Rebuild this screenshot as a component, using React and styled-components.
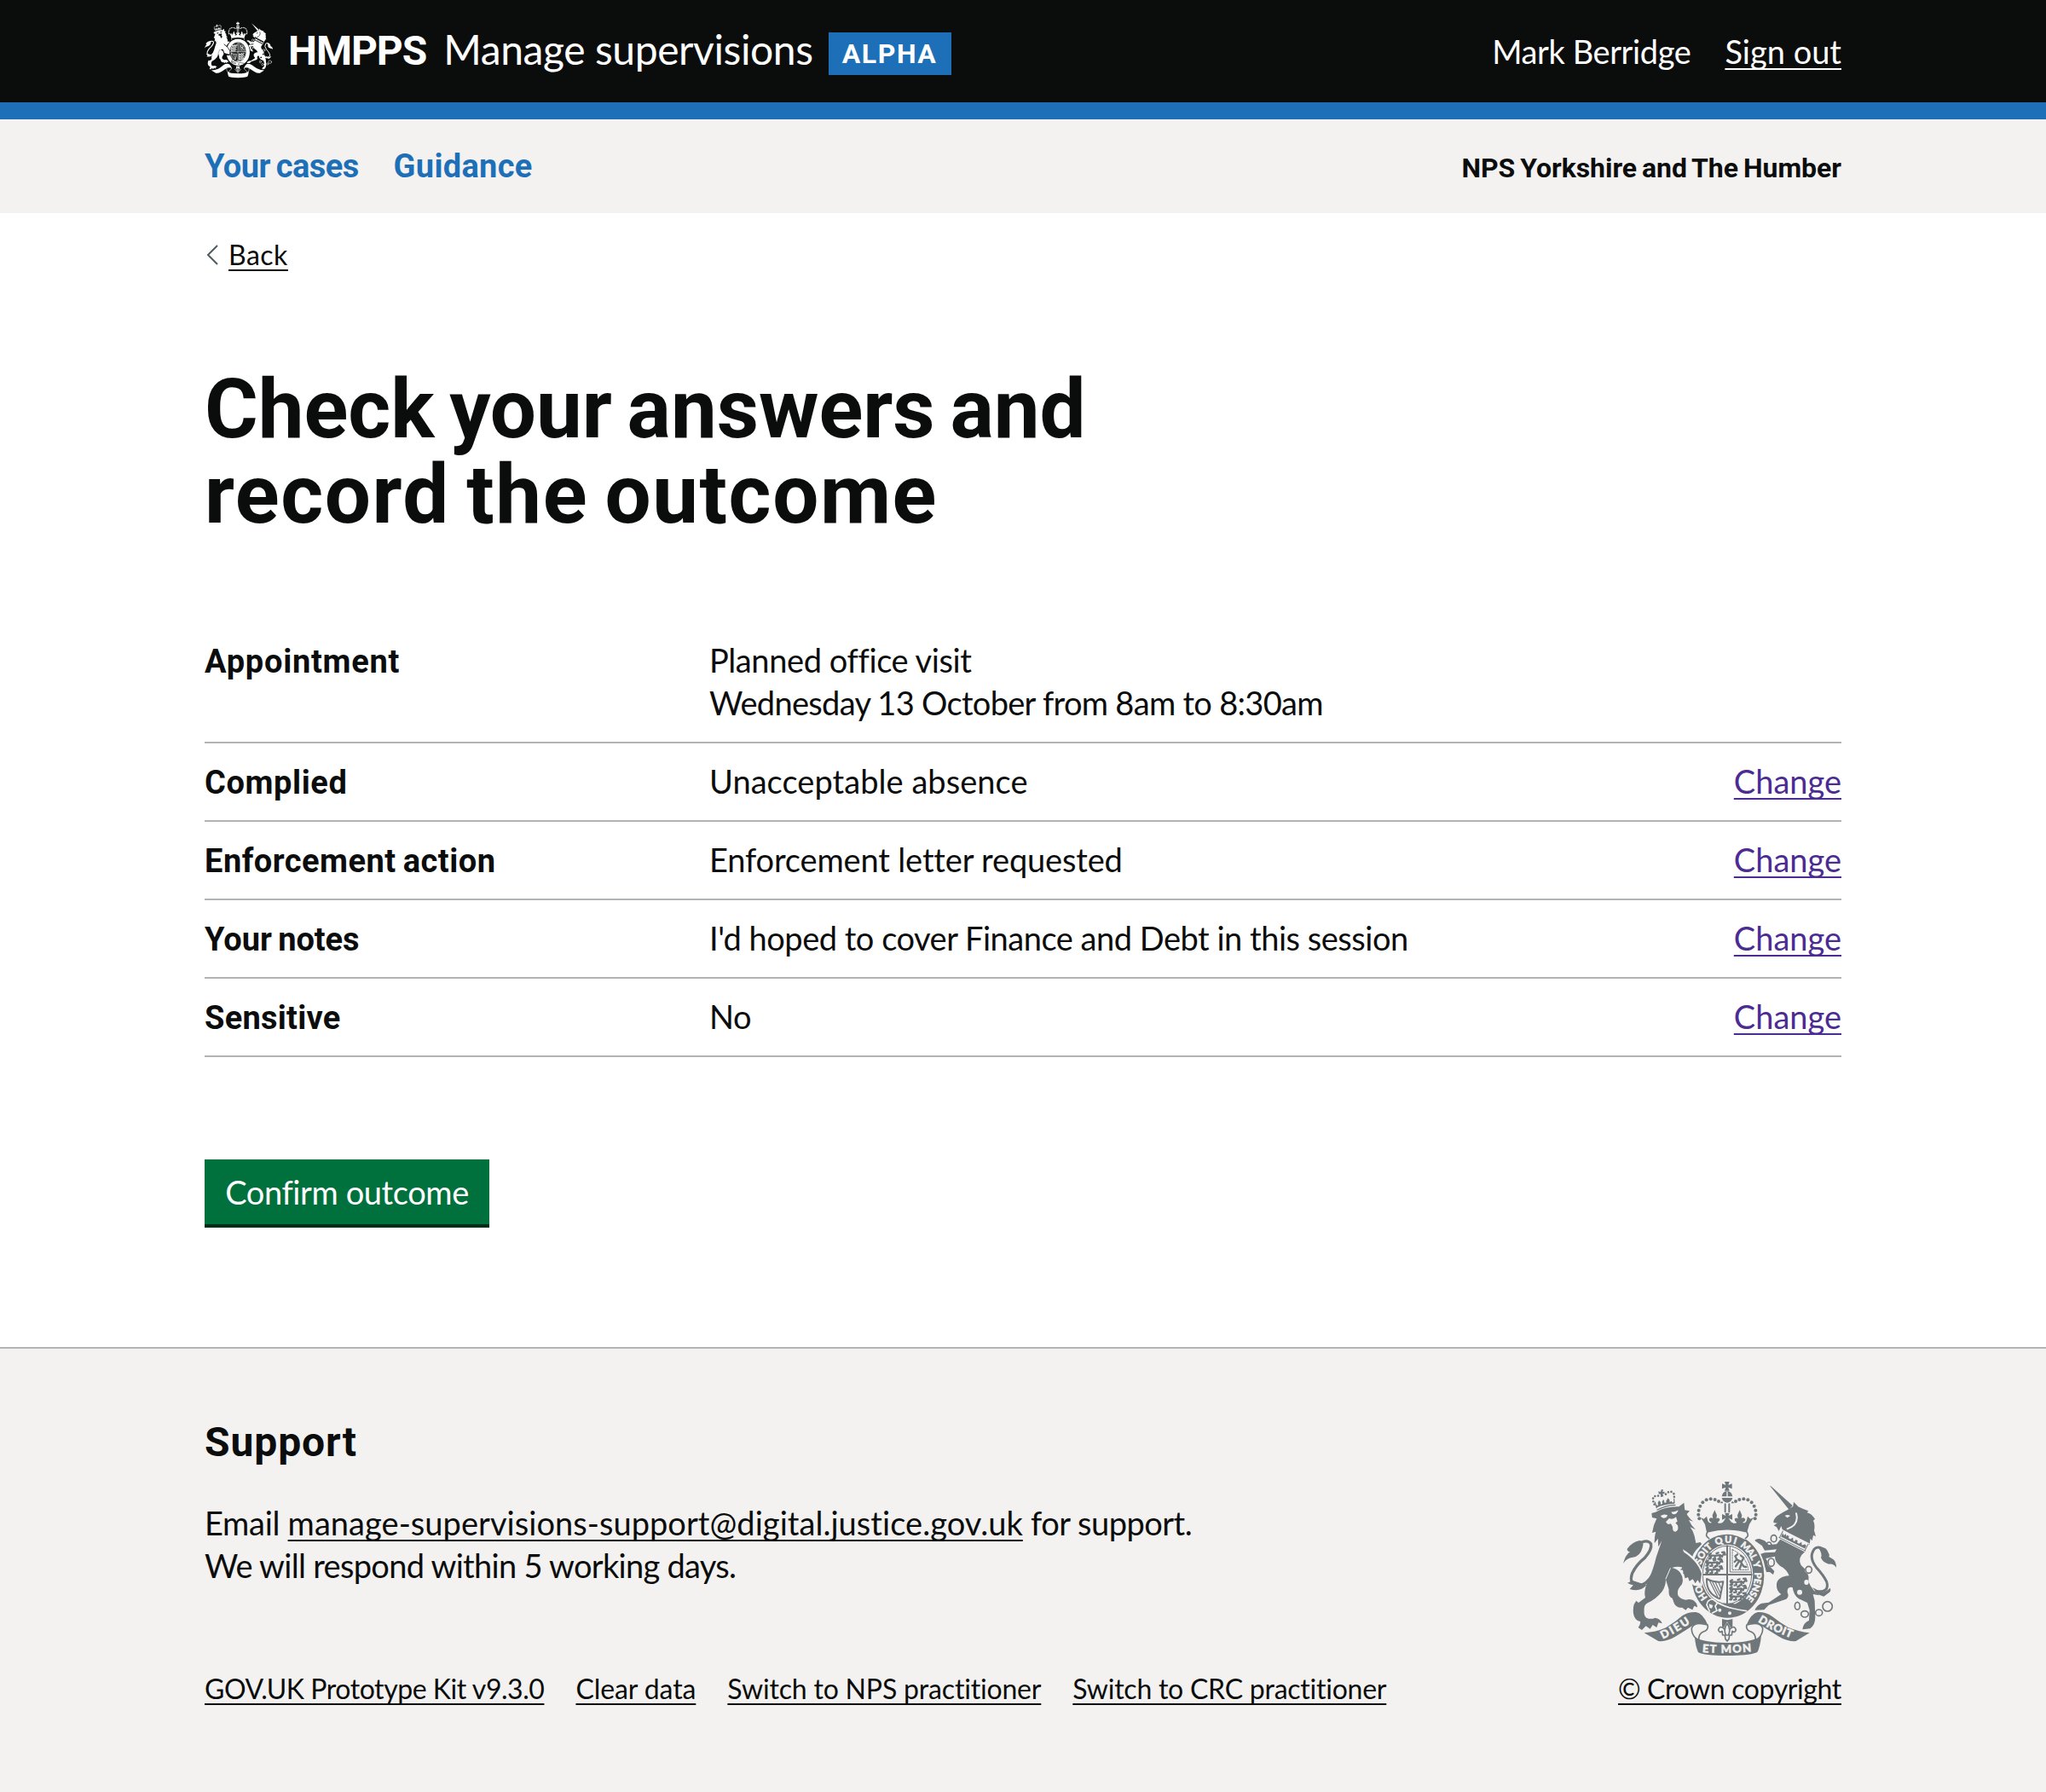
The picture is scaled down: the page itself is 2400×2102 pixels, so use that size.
import React from 'react';
import styled, { createGlobalStyle } from 'styled-components';

const ink = '#0b0c0c';
const blue = '#1d70b8';
const paper = '#f3f2f1';
const rule = '#b1b4b6';

const bodyFont = 'Lato, "Liberation Sans", sans-serif';
const boldFont = 'Roboto, "Liberation Sans", sans-serif';

const GlobalStyle = createGlobalStyle`
  *, *::before, *::after { box-sizing: border-box; }
  body {
    margin: 0;
    background: #fff;
    color: ${ink};
    font-family: ${bodyFont};
    font-size: 38px;
    line-height: 50px;
  }
  h1, h2, p, dl, dt, dd, ul { margin: 0; padding: 0; }
`;

const Container = styled.div`
  width: 1920px;
  margin: 0 auto;
  display: flex;
  flex-direction: ${p => (p.$column ? 'column' : 'row')};
  justify-content: ${p => (p.$column ? 'flex-start' : 'space-between')};
  align-items: ${p => p.$align || 'stretch'};
`;

const Tracked = styled.span`
  letter-spacing: ${p => p.$track || 0}px;
  white-space: pre;
`;

const Link = styled.a`
  color: ${p => p.$color || 'inherit'};
  letter-spacing: ${p => p.$track || 0}px;
  text-decoration: underline;
  text-decoration-thickness: 2px;
  text-underline-offset: 5px;
  text-decoration-skip-ink: none;
  white-space: nowrap;
`;

/* Header */
const Header = styled.header`
  height: 140px;
  background: ${ink};
  border-bottom: 20px solid ${blue};
  color: #fff;
`;

const Brand = styled.div`
  display: flex;
  align-items: flex-start;
`;

const HeaderCrest = styled.div`
  width: 80px;
  height: 67px;
  margin-top: 25px;
`;

const BrandName = styled.div`
  display: flex;
  align-items: baseline;
  gap: 20px;
  margin: 28px 0 0 18px;
  font-size: 48px;
  line-height: 60px;
`;

const Organisation = styled.strong`
  font-family: ${boldFont};
  letter-spacing: -1px;
`;

const Phase = styled.strong`
  width: 144px;
  height: 50px;
  margin: 38px 0 0 18px;
  background: ${blue};
  font: 700 32px/50px ${boldFont};
  letter-spacing: 1.6px;
  text-align: center;
`;

const Account = styled.div`
  display: flex;
  gap: 40px;
  padding-top: 35px;
`;

/* Primary navigation */
const Navigation = styled.nav`
  height: 110px;
  padding-top: 30px;
  background: ${paper};
  font-family: ${boldFont};
  font-weight: 700;
  word-spacing: -2px;
`;

const NavLinks = styled.div`
  display: flex;
  gap: 41px;
  color: ${blue};
`;

const Region = styled.div`
  font-size: 32px;
  line-height: 40px;
  letter-spacing: -0.03px;
`;

/* Main content */
const Main = styled.main`
  height: 1330px;
  padding-top: 29px;
`;

const Back = styled.div`
  display: flex;
  align-items: center;
  gap: 12px;
  height: 40px;
  padding-left: 2px;
  font-size: 32px;
  line-height: 40px;
`;

const Heading = styled.h1`
  margin-top: 111px;
  font: 700 96px/100px ${boldFont};
  word-spacing: -6px;
`;

const Line = styled.span`
  display: block;
  letter-spacing: ${p => p.$track}px;
`;

const Summary = styled.dl`
  margin-top: 120px;
`;

const SummaryRow = styled.div`
  display: grid;
  grid-template-columns: 592px 1fr auto;
  padding: ${p => (p.$first ? 1 : 21)}px 0 19px;
  border-bottom: 2px solid ${rule};
`;

const Key = styled.dt`
  font-family: ${boldFont};
  font-weight: 700;
  letter-spacing: ${p => p.$track}px;
  word-spacing: -2px;
`;

const Value = styled.dd`
  display: flex;
  flex-direction: column;
  margin-top: -2px;
  margin-bottom: 2px;
`;

const Button = styled.button`
  align-self: flex-start;
  width: 334px;
  height: 76px;
  margin-top: 120px;
  padding: 0;
  border: 0;
  background: #00703c;
  box-shadow: 0 4px 0 #002d18;
  color: #fff;
  font: 400 38px/76px ${bodyFont};
  letter-spacing: -0.4px;
`;

/* Footer */
const Footer = styled.footer`
  height: 522px;
  padding-top: 80px;
  border-top: 2px solid ${rule};
  background: ${paper};
`;

const Support = styled.h2`
  margin-bottom: 39px;
  font: 700 48px/60px ${boldFont};
  letter-spacing: 0.9px;
`;

const Legal = styled.div`
  display: flex;
  gap: 37px;
  margin-top: 100px;
  font-size: 32px;
  line-height: 40px;
`;

const Copyright = styled.div`
  display: flex;
  flex-direction: column;
  align-items: center;
  width: 262px;
  font-size: 32px;
  line-height: 40px;
`;

const FooterCrest = styled.div`
  width: 250px;
  height: 204px;
  margin-bottom: 19px;
`;

const CrestSvg = styled.svg`
  display: block;
  width: 100%;
  height: 100%;
  overflow: visible;
  color: ${p => p.$ink};
  --paper: ${p => p.$paper};

  .fill { fill: currentColor; }
  .line { fill: none; stroke: currentColor; stroke-linecap: round; stroke-linejoin: round; }
  .cut { fill: var(--paper); }
  .cutline { fill: none; stroke: var(--paper); stroke-linecap: round; stroke-linejoin: round; }
  text {
    fill: var(--paper);
    stroke: var(--paper);
    stroke-width: 1.4px;
    font-family: Lato, sans-serif;
    font-weight: 900;
  }
`;

const pearls = [
  [340, 214], [337, 200], [338, 185], [343, 170], [352, 157], [365, 148],
  [380, 145], [395, 147], [408, 153],
];

function Passant({ x, y }) {
  return (
    <path
      className="line"
      strokeWidth="6"
      transform={`translate(${x} ${y}) scale(1.1 1.15)`}
      d="M4 14 L0 6 L6 2 M4 8 L20 9 L36 7 L42 12 M8 9 L5 18 L0 18 M18 10 L20 18 L13 19 M34 8 L36 18 L29 19 M42 10 L47 4 L52 6 L49 -2 L42 -1 M24 2 L30 0"
    />
  );
}

function Crest({ color, background, lettering }) {
  return (
    <CrestSvg viewBox="72 84 750 612" $ink={color} $paper={background} aria-hidden="true">
      {/* Lion: crown */}
      <path className="line" strokeWidth="8" strokeDasharray="0 11" d="M182 164 L176 148 Q178 134 192 133 Q199 134 203 140 M222 128 Q232 117 242 120 Q254 126 252 136 L250 148" />
      <path className="fill" d="M196 118 L204 120 L206 112 L213 112 L211 120 L218 119 L217 127 L211 126 L214 136 L204 138 L204 128 L197 127 Z" />
      <path className="line" strokeWidth="3.5" d="M190 176 L184 156 M252 158 L251 144" />
      <path className="fill" d="M188 176 L190 166 L195 168 L194 158 L198 150 L204 156 L204 164 L210 162 L209 154 L214 146 L218 158 L223 158 L224 150 L230 142 L235 148 L236 156 L242 152 L246 158 L252 154 L252 162 Q220 162 188 176 Z" />
      <path className="line" strokeWidth="4" d="M192 183 Q220 168 255 166" />
      {/* Lion: head, mane and body */}
      <path
        className="fill"
        d="M186 191 Q225 170 268 172 L286 158 L289 184 L306 187 L296 198 Q304 214 319 224 L303 219 Q312 240 327 253 L308 244 Q320 260 323 275
           L328 300 L344 297 L350 306 Q324 322 314 350 L338 385 Q350 402 348 424 L345 444 L336 430 L326 442 L318 426 L306 434 L302 418
           L290 424 L294 409 L282 407 L288 396 L272 394 L282 386 Q262 380 244 387 Q260 390 272 403 Q288 426 278 446 Q258 466 266 486
           Q276 498 292 500 Q314 494 326 508 Q334 514 333 526 L322 521 L316 535 L300 527 L292 536 L280 527 Q262 530 252 514 L245 494 Q230 488 233 464
           L222 428 Q222 452 208 472 Q188 497 158 511 Q144 518 146 538 Q144 556 154 563 Q170 570 184 563 Q203 565 209 583 L196 580 L190 597
           L176 588 L167 602 L152 592 L138 606 L125 597 Q134 586 132 576 Q112 572 108 548 Q106 530 110 516 L118 503 L126 510 L150 492
           Q142 466 162 428 Q180 386 188 350 L208 292 L196 313 Q194 298 195 284 L182 301 Q182 276 187 260 L174 264 Q178 236 190 214 L174 210 L172 195 Z"
      />
      <path className="cut" d="M204 204 Q215 196 228 202 Q226 212 214 212 Q206 210 204 204 Z M242 190 Q254 192 266 184 Q262 199 250 199 Q242 198 242 190 Z" />
      <path className="cut" d="M222 226 L234 213 Q248 219 258 208 L263 224 L256 229 L264 238 Q269 256 256 260 Q245 260 246 243 L240 232 L230 234 Z" />
      <path className="cutline" strokeWidth="3" d="M238 389 L222 426" />
      {/* Lion: tail */}
      <path className="line" strokeWidth="10" d="M176 410 Q152 454 118 449 Q92 440 104 406 Q118 376 148 352 Q174 322 170 303 Q160 288 138 297" />
      <path className="fill" d="M72 372 Q80 342 96 330 Q86 330 86 320 Q104 296 130 291 Q148 292 140 316 Q132 348 106 350 Q84 352 72 372 Z" />
      <path className="fill" d="M106 432 L87 440 Q98 446 108 448 L95 462 Q132 474 154 448 Z" />

      {/* Unicorn: horn and head */}
      <path className="fill" d="M588 98 L594 101 L668 168 L656 183 Z" />
      <path
        className="fill"
        d="M655 181 L670 171 L672 155 L688 172 L706 180 L724 187 L719 193 Q734 196 747 215 L741 221 Q748 234 744 256 L750 277
           L741 272 L737 292 L731 284 L728 306 L718 300 L712 312 L700 292 L690 298 L684 286 L674 288 L668 276 L656 276 L648 262
           L632 252 L628 240 L620 258 L612 244 L602 238 L614 230 L601 228 Q600 214 618 202 L638 190 Z"
      />
      <path className="cutline" strokeWidth="6" d="M681 196 Q692 236 650 250" />
      <path className="cut" d="M641 204 Q650 198 660 204 L650 211 Z" />
      {/* Unicorn: body, hind legs */}
      <path
        className="fill"
        d="M627 284 L712 330 Q684 352 698 378 Q730 404 724 434 Q730 452 742 466 L762 484 L740 480 L746 503 L748 562 Q748 588 730 601
           L703 604 Q706 580 726 572 L728 536 L720 510 L690 496 Q672 484 668 456 Q648 452 650 474 Q658 488 646 497 L584 518 L568 535 L535 536
           Q544 516 560 512 L584 509 L628 480 Q610 468 612 444 Q616 418 656 415 Q648 392 624 380 Q606 366 606 347 L574 354 L590 384
           L604 399 L600 411 L588 402 L576 402 L568 376 L552 358 L548 341 L570 334 L606 332 L612 322 L570 326 L560 308 L531 298
           Q536 284 552 285 L570 292 L584 306 L612 304 Z"
      />
      {/* Unicorn: coronet collar */}
      <g transform="translate(634 258) rotate(27)">
        <path className="cut" d="M-4 -4 H104 V30 H-4 Z" />
        <path className="line" strokeWidth="3" d="M0 24 V0 M100 0 V24 M-2 26 H102" />
        <path className="fill" d="M3 20 V6 L10 12 L14 4 L20 12 V6 H28 V12 L36 14 L42 4 L48 14 L54 12 V6 H62 V12 L70 14 L76 4 L82 14 L90 6 L97 8 V20 Z" />
      </g>
      {/* Unicorn: tail */}
      <path className="line" strokeWidth="9" d="M752 470 Q800 474 788 436 Q778 414 752 386 Q724 350 744 322 Q754 310 772 319" />
      <path className="fill" d="M760 318 Q784 308 794 334 Q800 342 796 348 L812 358 Q822 368 822 386 Q812 372 796 374 Q776 370 768 352 Q774 338 760 318 Z" />
      <path className="fill" d="M738 456 L768 472 Q784 474 800 458 Q806 468 794 476 L778 488 L756 480 Z" />
      {/* Unicorn: chain */}
      <g strokeWidth="5">
        <ellipse className="line" cx="602" cy="284" rx="10" ry="12" />
        <ellipse className="line" cx="585" cy="308" rx="9" ry="11" />
        <ellipse className="cut" cx="593" cy="368" rx="14" ry="17" />
        <ellipse className="line" cx="593" cy="368" rx="11" ry="14" />
        <ellipse className="cut" cx="725" cy="394" rx="14" ry="15" />
        <ellipse className="line" cx="725" cy="394" rx="11" ry="12" />
        <ellipse className="cut" cx="717" cy="438" rx="8" ry="9" />
        <ellipse className="cut" cx="693" cy="473" rx="9" ry="9" />
        <ellipse className="line" cx="685" cy="521" rx="9" ry="13" />
        <ellipse className="line" cx="711" cy="550" rx="13" ry="11" />
        <ellipse className="line" cx="761" cy="545" rx="12" ry="11" />
        <circle className="line" cx="791" cy="523" r="17" />
      </g>

      {/* Garter and shield */}
      <path className="cut" d="M440 262 A134 153 0 0 0 440 568 A134 153 0 0 0 548 325 L556 306 Q500 262 440 262 Z" />
      <ellipse className="fill" cx="440" cy="415" rx="128" ry="148" />
      <ellipse className="cut" cx="438" cy="412" rx="91" ry="107" />
      <ellipse className="line" cx="438" cy="412" rx="86" ry="102" strokeWidth="3" />
      <path className="line" strokeWidth="6" d="M438 310 V515 M352 411 H524" />
      <path className="line" strokeWidth="3" d="M448 314 V402 H520" />
      <Passant x={374} y={334} />
      <Passant x={364} y={359} />
      <Passant x={364} y={384} />
      <Passant x={449} y={427} />
      <Passant x={448} y={452} />
      <Passant x={448} y={478} />
      <path className="line" strokeWidth="3" strokeDasharray="5 4" d="M456 323 V394 H512 Q506 346 456 323" />
      <path className="line" strokeWidth="7" d="M466 346 L472 358 L484 364 L496 382 L504 384 M472 358 L464 366 M480 364 L468 382 M488 374 L482 390 M488 366 L496 352 L486 344 M466 346 L474 340" />
      <path className="line" strokeWidth="6" d="M366 426 Q364 478 412 496 L424 436 Q392 440 366 426 Z" />
      <path className="line" strokeWidth="3.5" d="M377 434 L404 488 M387 438 L410 484 M397 439 L414 476 M408 439 L418 462" />
      {lettering && (
        <g fontSize="33">
          <defs>
            <path id="garter" d="M438 525 A97 113 0 0 1 438 299 A97 113 0 0 1 438 525" />
            <path id="scroll-left" d="M212 638 Q262 614 322 572" />
            <path id="scroll-right" d="M546 577 Q600 612 686 643" />
            <path id="scroll-centre" d="M350 684 Q438 691 528 681" />
          </defs>
          <text><textPath href="#garter" startOffset="78" textLength="52">HO</textPath></text>
          <text><textPath href="#garter" startOffset="200" textLength="76">SOIT</textPath></text>
          <text><textPath href="#garter" startOffset="290" textLength="70">QUI</textPath></text>
          <text><textPath href="#garter" startOffset="376" textLength="68">MAL</textPath></text>
          <text><textPath href="#garter" startOffset="450">Y</textPath></text>
          <text><textPath href="#garter" startOffset="486" textLength="100">PENSE</textPath></text>
        </g>
      )}
      {/* Lion's fore paw resting on the garter */}
      <path className="cut" d="M282 322 Q338 356 352 404 L350 452 L322 450 L300 434 L306 400 Z" />
      <path className="fill" d="M270 322 Q334 360 348 408 L343 443 L334 430 L326 442 L317 427 L305 434 L300 420 L290 424 L280 390 Z" />
      {/* Buckle and strap */}
      <path className="fill" d="M366 520 Q366 498 392 500 L408 512 L470 520 L508 540 Q460 572 408 550 L378 544 Z" />
      <path className="cutline" strokeWidth="5" d="M376 540 L366 518 Q368 498 388 498 L404 510 L396 522 L402 538 L386 546 M404 510 Q440 530 506 539" />
      <path className="cut" d="M374 514 L388 519 L384 530 L376 528 Z" />
      <circle className="cut" cx="412" cy="536" r="6" />
      <circle className="cut" cx="447" cy="547" r="6" />
      <path className="fill" d="M420 514 L464 512 L456 524 L440 520 Z" />

      {/* Crown */}
      <path className="fill" d="M429 84 H446 L442 96 L455 91 V109 L442 104 L446 116 H429 L433 104 L420 109 V91 L433 96 Z" />
      <path className="fill" d="M419 136 Q422 118 438 117 Q454 118 457 136 Z M419 141 H457 Q454 155 438 158 Q422 155 419 141 Z" />
      <path className="cutline" strokeWidth="4" d="M438 120 V137" />
      {pearls.map(([x, y]) => (
        <React.Fragment key={`${x}-${y}`}>
          <circle className="fill" cx={x} cy={y} r="6" />
          <circle className="fill" cx={876 - x} cy={y} r="6" />
        </React.Fragment>
      ))}
      <path className="fill" d="M412 160 L420 152 L424 160 Z M464 160 L456 152 L452 160 Z" />
      <path className="line" strokeWidth="6" d="M431 163 V190 M445 163 V190" />
      <path
        className="fill"
        d="M366 262 L360 234 L345 210 L356 215 L366 206 L370 222 Q374 232 384 228 Q370 222 376 214 Q382 208 388 214 L386 202 L394 184 L402 202 L400 214
           Q408 208 412 216 Q412 224 404 228 Q414 234 424 226 L433 212 L420 218 V198 L433 204 L430 194 H446 L443 204 L456 198 V218 L443 212 L452 226 Q462 234 472 228
           Q464 224 464 216 Q468 208 476 214 L474 202 L482 184 L490 202 L488 214 Q494 208 500 214 Q506 222 492 228 Q502 232 506 222 L510 206 L520 215 L531 210 L516 234 L508 262 Q438 240 366 262 Z"
      />
      <path className="cut" d="M368 262 Q438 244 508 262 Q520 276 502 288 Q438 250 374 288 Q356 276 368 262 Z" />
      <path className="line" strokeWidth="5" d="M374 284 Q358 274 370 260 Q438 242 506 260 Q518 274 502 284" />

      {/* Scroll */}
      <path className="fill" d="M146 616 Q186 614 222 598 Q256 578 280 556 Q300 542 328 543 Q352 546 370 588 Q350 578 326 584 Q296 604 258 628 Q226 648 196 645 Z" />
      <path className="fill" d="M728 616 Q690 612 652 596 Q624 580 596 558 Q574 542 546 543 Q522 548 506 588 Q524 578 548 584 Q580 604 618 628 Q650 648 680 645 Z" />
      <path className="cut" d="M366 588 Q322 576 314 602 Q318 618 326 634 L350 640 Q372 616 366 588 Z M508 588 Q554 576 560 602 Q558 618 550 634 L526 640 Q504 616 508 588 Z" />
      <path className="line" strokeWidth="5" d="M369 588 Q322 574 313 600 Q312 620 330 638 M369 588 Q374 606 354 612 Q338 618 338 640 M507 588 Q554 574 563 600 Q564 620 546 638 M507 588 Q502 606 522 612 Q538 618 538 640" />
      <path className="fill" d="M324 630 Q350 650 438 651 Q526 650 558 626 Q554 666 544 684 Q520 696 438 696 Q356 696 336 684 Q326 662 324 630 Z" />
      {lettering && (
        <g fontSize="39">
          <text><textPath href="#scroll-left" textLength="112">DIEU</textPath></text>
          <text><textPath href="#scroll-right" textLength="130">DROIT</textPath></text>
          <text><textPath href="#scroll-centre" textLength="174">ET MON</textPath></text>
        </g>
      )}

      {/* Fleur-de-lis pendant */}
      <path className="fill" d="M420 567 Q438 574 457 567 V600 H420 Z" />
      <path className="cut" d="M438 577 L450 598 Q466 586 472 604 Q470 618 458 616 L446 626 Q450 642 438 646 Q426 642 430 626 L418 616 Q406 618 404 604 Q410 586 426 598 Z" />
      <path className="line" strokeWidth="5" d="M438 583 Q424 602 433 622 M438 583 Q452 602 443 622 M430 604 Q412 586 407 606 Q412 618 420 610 L422 624 H454 L456 610 Q464 618 469 606 Q464 586 446 604 M430 626 L432 638 L438 645 L444 638 L446 626" />
    </CrestSvg>
  );
}

const answers = [
  {
    key: 'Appointment',
    track: 0.75,
    values: [
      ['Planned office visit', -0.4],
      ['Wednesday 13 October from 8am to 8:30am', -0.7],
    ],
    fixed: true,
  },
  { key: 'Complied', track: 0.6, values: [['Unacceptable absence', 0.05]] },
  { key: 'Enforcement action', track: 0.5, values: [['Enforcement letter requested', -0.15]] },
  { key: 'Your notes', track: -0.05, values: [["I'd hoped to cover Finance and Debt in this session", -0.48]] },
  { key: 'Sensitive', track: 0.25, values: [['No', -0.5]] },
];

const legalLinks = [
  ['GOV.UK Prototype Kit v9.3.0', -0.45],
  ['Clear data', -0.1],
  ['Switch to NPS practitioner', -0.18],
  ['Switch to CRC practitioner', -0.24],
];

export default function App() {
  return (
    <>
      <GlobalStyle />
      <Header>
        <Container>
          <Brand>
            <HeaderCrest>
              <Crest color="#fff" background={ink} />
            </HeaderCrest>
            <BrandName>
              <Organisation>HMPPS</Organisation>
              <Tracked $track={-0.42}>Manage supervisions</Tracked>
            </BrandName>
            <Phase>ALPHA</Phase>
          </Brand>
          <Account>
            <Tracked $track={-0.4}>Mark Berridge</Tracked>
            <Link>Sign out</Link>
          </Account>
        </Container>
      </Header>
      <Navigation>
        <Container $align="baseline">
          <NavLinks>
            <Tracked $track={-0.55}>Your cases</Tracked>
            <Tracked $track={0.3}>Guidance</Tracked>
          </NavLinks>
          <Region>NPS Yorkshire and The Humber</Region>
        </Container>
      </Navigation>
      <Main>
        <Container $column>
          <Back>
            <svg width="14" height="24" viewBox="0 0 14 24" fill="none" stroke="#505a5f" strokeWidth="2">
              <path d="M13 1 L2 12 L13 23" />
            </svg>
            <Link $track={0.5}>Back</Link>
          </Back>
          <Heading>
            <Line $track={-0.05}>Check your answers and</Line>
            <Line $track={1.55}>record the outcome</Line>
          </Heading>
          <Summary>
            {answers.map(row => (
              <SummaryRow key={row.key} $first={row.fixed}>
                <Key $track={row.track}>{row.key}</Key>
                <Value>
                  {row.values.map(([text, track]) => (
                    <Tracked key={text} $track={track}>{text}</Tracked>
                  ))}
                </Value>
                {!row.fixed && (
                  <Value>
                    <Link $color="#4c2c92">Change</Link>
                  </Value>
                )}
              </SummaryRow>
            ))}
          </Summary>
          <Button>Confirm outcome</Button>
        </Container>
      </Main>
      <Footer>
        <Container $align="flex-end">
          <div>
            <Support>Support</Support>
            <p>
              <Tracked $track={-0.3}>{'Email '}</Tracked>
              <Link $track={0.05}>manage-supervisions-support@digital.justice.gov.uk</Link>
              <Tracked $track={-0.5}>{' for support.'}</Tracked>
              <br />
              <Tracked $track={-0.7}>We will respond within 5 working days.</Tracked>
            </p>
            <Legal>
              {legalLinks.map(([text, track]) => (
                <Link key={text} $track={track}>{text}</Link>
              ))}
            </Legal>
          </div>
          <Copyright>
            <FooterCrest>
              <Crest color="#6f777b" background={paper} lettering />
            </FooterCrest>
            <Link $track={-0.38}>© Crown copyright</Link>
          </Copyright>
        </Container>
      </Footer>
    </>
  );
}
